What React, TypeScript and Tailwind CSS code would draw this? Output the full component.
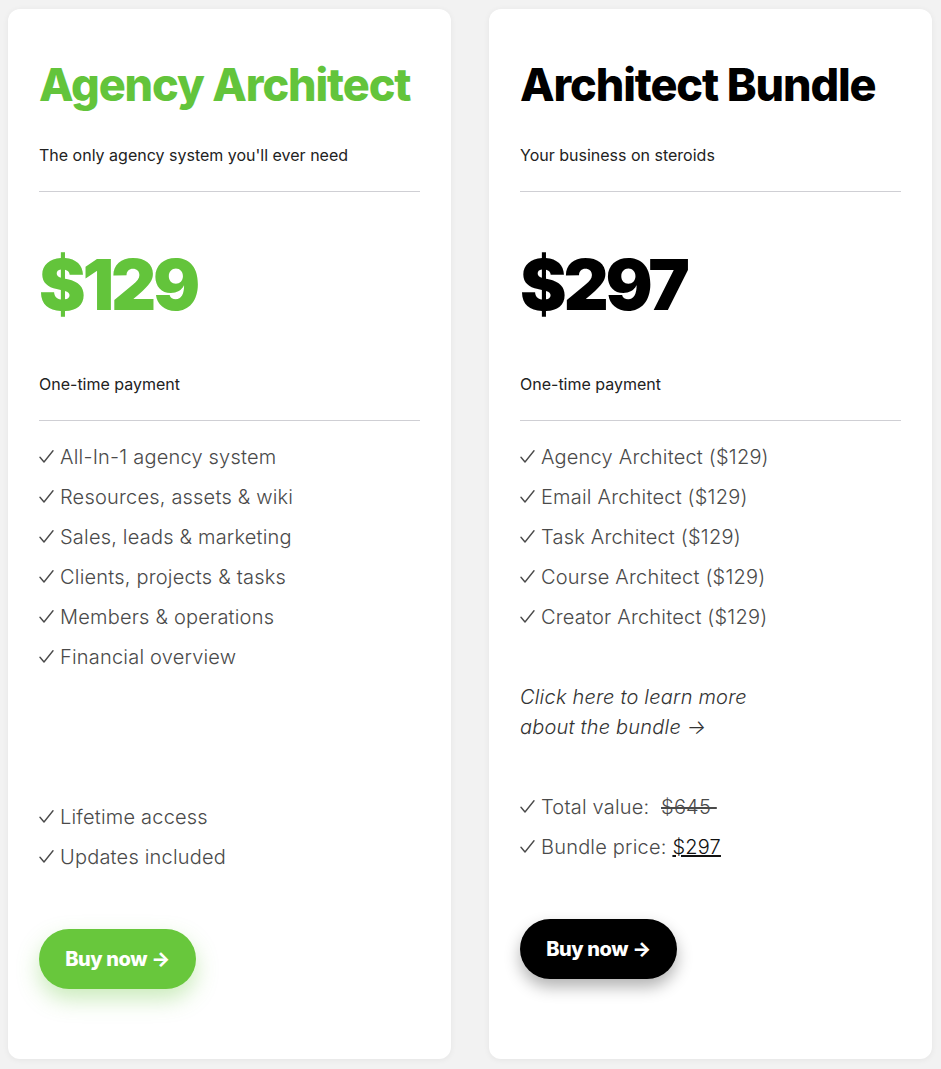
import { ReactNode } from 'react';

const Tick = () => (
  <svg width="15" height="13" viewBox="0 0 15 13" className="inline-block mr-[6px] mb-[1px] align-baseline">
    <path d="M1 7.2 L5 12 L14 0.8" fill="none" stroke="currentColor" strokeWidth="1.4" strokeLinecap="round" strokeLinejoin="round" />
  </svg>
);

const Check = ({ children }: { children: ReactNode }) => (
  <li className="h-[40px] leading-[40px] whitespace-nowrap">
    <Tick />
    {children}
  </li>
);

const Rule = ({ className }: { className: string }) => (
  <div className={`h-px bg-[#cfcfd4] ${className}`} />
);

const App = () => {
  return (
    <div
      className="min-h-screen bg-[#f2f2f2] pt-[9px] pl-[8px] flex gap-[38px]"
      style={{ fontFamily: 'Inter, "Noto Sans", sans-serif' }}
    >
      {/* Agency Architect */}
      <div className="w-[443px] h-[1050px] bg-white rounded-[12px] shadow-[0_1px_6px_rgba(0,0,0,0.06)] px-[31px] pt-[49px]">
        <h1 className="text-[45px] leading-[54px] font-extrabold tracking-[-0.025em] text-[#63c43b]">
          Agency Architect
        </h1>
        <p className="mt-[31px] text-[16px] leading-[24px] text-[#222]">
          The only agency system you'll ever need
        </p>
        <Rule className="mt-[24px]" />
        <div className="mt-[58px] text-[70px] leading-[70px] font-black tracking-[-0.045em] text-[#63c43b]">
          $129
        </div>
        <p className="mt-[52px] text-[16px] leading-[24px] text-[#222]">One-time payment</p>
        <Rule className="mt-[24px]" />
        <ul className="mt-[16px] text-[20px] font-light tracking-[0.01em] text-[#4a4a4a]">
          <Check>All-In-1 agency system</Check>
          <Check>Resources, assets &amp; wiki</Check>
          <Check>Sales, leads &amp; marketing</Check>
          <Check>Clients, projects &amp; tasks</Check>
          <Check>Members &amp; operations</Check>
          <Check>Financial overview</Check>
        </ul>
        <ul className="mt-[120px] text-[20px] font-light tracking-[0.01em] text-[#4a4a4a]">
          <Check>Lifetime access</Check>
          <Check>Updates included</Check>
        </ul>
        <button className="mt-[52px] w-[157px] h-[60px] rounded-full bg-[#68c73c] text-white text-[20px] font-extrabold tracking-[-0.02em] shadow-[0_10px_22px_rgba(104,199,60,0.35)]">
          Buy now →
        </button>
      </div>

      {/* Architect Bundle */}
      <div className="w-[443px] h-[1050px] bg-white rounded-[12px] shadow-[0_1px_6px_rgba(0,0,0,0.06)] px-[31px] pt-[49px]">
        <h1 className="text-[45px] leading-[54px] font-extrabold tracking-[-0.025em] text-black">
          Architect Bundle
        </h1>
        <p className="mt-[31px] text-[16px] leading-[24px] text-[#222]">Your business on steroids</p>
        <Rule className="mt-[24px]" />
        <div className="mt-[58px] text-[70px] leading-[70px] font-black tracking-[-0.045em] text-black">
          $297
        </div>
        <p className="mt-[52px] text-[16px] leading-[24px] text-[#222]">One-time payment</p>
        <Rule className="mt-[24px]" />
        <ul className="mt-[16px] text-[20px] font-light tracking-[0.01em] text-[#4a4a4a]">
          <Check>Agency Architect ($129)</Check>
          <Check>Email Architect ($129)</Check>
          <Check>Task Architect ($129)</Check>
          <Check>Course Architect ($129)</Check>
          <Check>Creator Architect ($129)</Check>
        </ul>
        <p className="mt-[45px] text-[20px] leading-[30px] font-light italic tracking-[0.01em] text-[#333]">
          Click here to learn more
          <br />
          about the bundle →
        </p>
        <ul className="mt-[45px] text-[20px] font-light tracking-[0.01em] text-[#4a4a4a]">
          <Check>
            Total value:&nbsp; <span className="line-through">$645&nbsp;</span>
          </Check>
          <Check>
            Bundle price: <span className="underline text-[#111]">$297</span>
          </Check>
        </ul>
        <button className="mt-[52px] w-[157px] h-[60px] rounded-full bg-black text-white text-[20px] font-extrabold tracking-[-0.02em] shadow-[0_8px_16px_rgba(0,0,0,0.3)]">
          Buy now →
        </button>
      </div>
    </div>
  );
};

export default App;
